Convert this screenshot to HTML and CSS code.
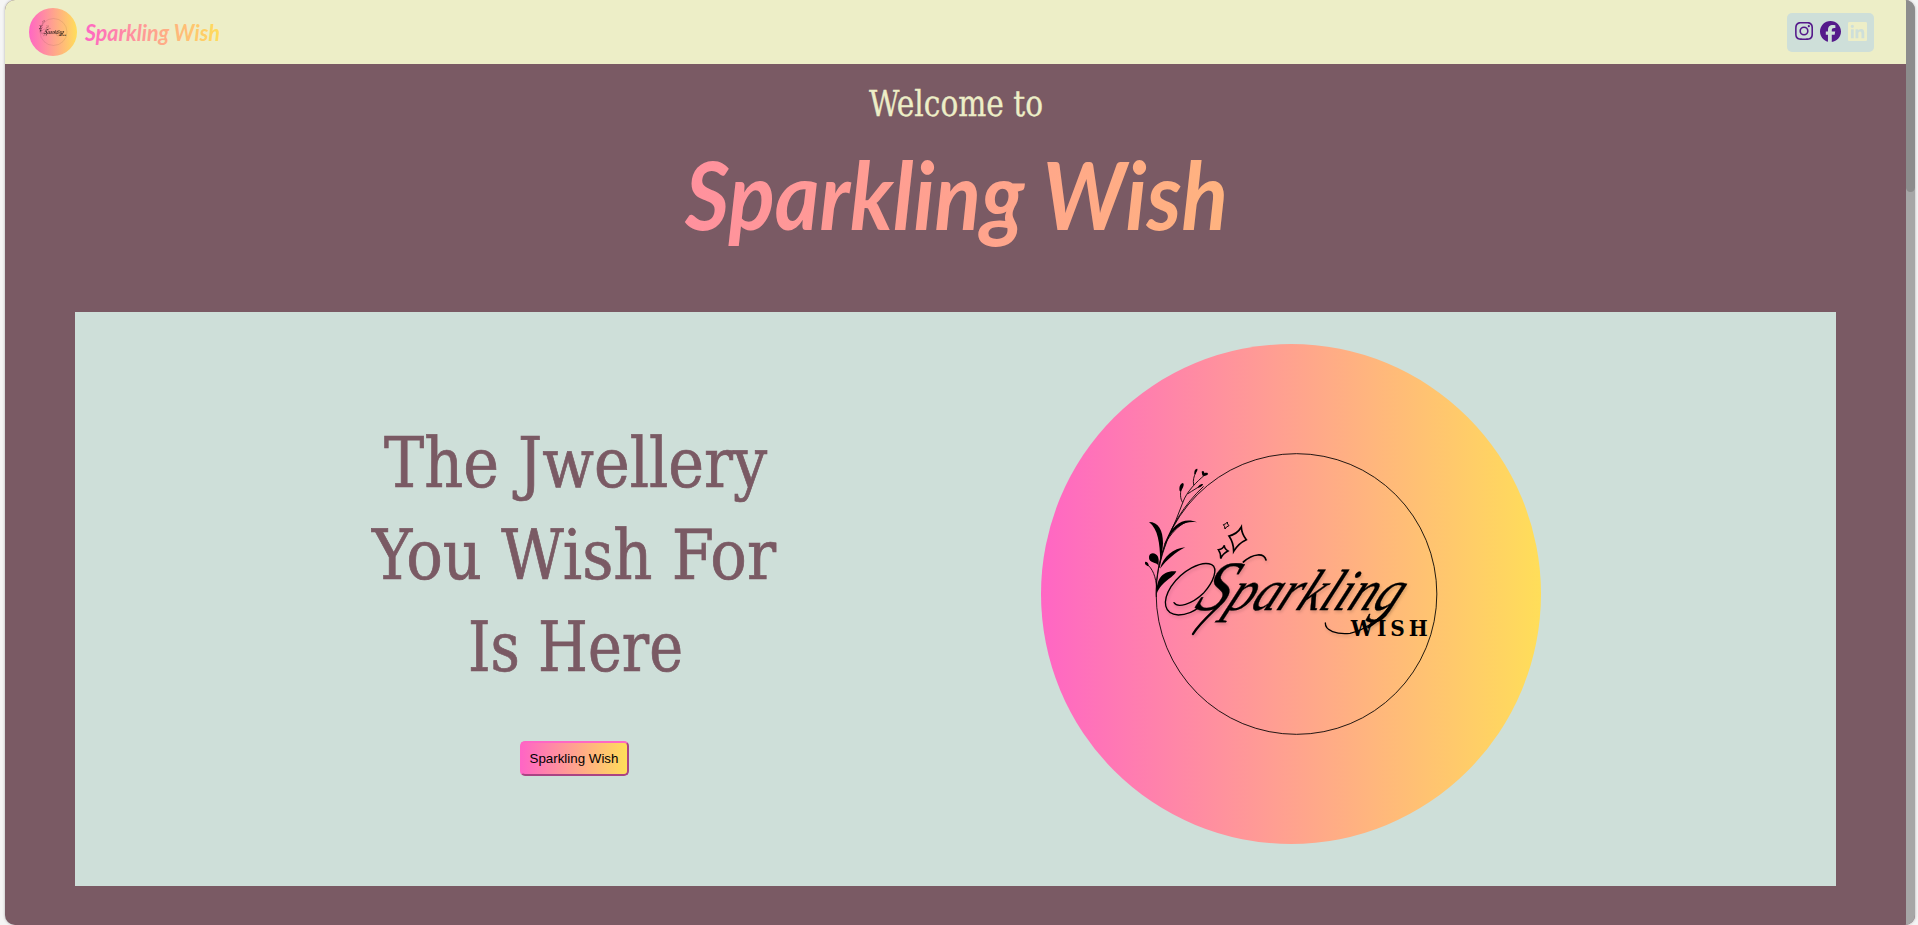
FILE: index.html
```html
<!DOCTYPE html>
<html lang="en">
<head>
<meta charset="utf-8">
<title>Sparkling Wish</title>
<link rel="stylesheet" href="styles.css">
</head>
<body>
<div class="window">
  <div class="page">
    <header class="navbar">
      <a class="brand">
        <span class="brand-logo">
          <svg viewBox="0 0 500 500"><use href="#emblem"/></svg>
        </span>
        <svg class="brand-name" viewBox="0 0 150 48">
          <defs>
            <linearGradient id="brandFill" gradientUnits="userSpaceOnUse" x1="0" y1="0" x2="136" y2="0">
              <stop offset="0" stop-color="#ff66c4"/><stop offset="1" stop-color="#ffde59"/>
            </linearGradient>
          </defs>
          <text class="script" x="0" y="33" font-size="22" textLength="135" lengthAdjust="spacingAndGlyphs" fill="url(#brandFill)">Sparkling Wish</text>
        </svg>
      </a>
      <nav class="social">
        <svg class="ic-instagram" viewBox="0 0 448 448"><path fill="#551a8b" d="M224 109a115 115 0 1 0 0 230 115 115 0 0 0 0-230zm0 190a75 75 0 1 1 0-150 75 75 0 0 1 0 150zM371 104a27 27 0 1 1-54 0 27 27 0 0 1 54 0zM448 132c-2-36-10-68-36-94S354 4 318 2C281 0 170 0 133 2 97 4 65 12 39 38S5 96 3 132c-2 37-2 148 0 185 2 36 10 68 36 94s58 34 94 36c37 2 148 2 185 0 36-2 68-10 94-36s34-58 36-94c2-37 2-148 0-185zm-48 224a76 76 0 0 1-43 43c-29 12-99 9-132 9s-102 3-132-9a76 76 0 0 1-43-43c-12-29-9-99-9-132s-3-102 9-132a76 76 0 0 1 43-43c29-12 99-9 132-9s102-3 132 9a76 76 0 0 1 43 43c12 29 9 99 9 132s3 102-9 132z"/></svg>
        <svg class="ic-facebook" viewBox="0 0 512 512"><path fill="#551a8b" d="M512 256C512 114.600 397.400 0 256 0S0 114.600 0 256c0 120 82.700 220.800 194.200 248.500V334.200h-52.800V256h52.800v-33.700c0-87.100 39.400-127.500 125-127.500 16.200 0 44.200 3.200 55.700 6.400V172c-6-.6-16.500-1-29.600-1-42 0-58.200 15.900-58.200 57.200V256h83.600l-14.400 78.200h-69.300v175.900C413.800 494.800 512 386.900 512 256z"/></svg>
        <svg class="ic-linkedin" viewBox="0 0 448 448"><path fill="#edeec7" d="M416 0H32C14 0 0 15 0 32v384c0 18 14 32 32 32h384c18 0 32-14 32-32V32c0-17-14-32-32-32zM135 384H69V170h66v214zM102 141a38 38 0 1 1 0-77 38 38 0 0 1 0 77zm282 243h-66V280c0-25-1-57-35-57s-40 27-40 55v106h-66V170h64v29h1c9-17 30-35 63-35 67 0 79 45 79 102v118z"/></svg>
      </nav>
    </header>

    <section class="intro">
      <svg class="welcome" viewBox="0 0 200 60">
        <text class="serif" x="13" y="41.500" font-size="35.500" stroke="#edeec7" stroke-width=".3" textLength="174" lengthAdjust="spacingAndGlyphs" fill="#edeec7">Welcome to</text>
      </svg>
      <svg class="title" viewBox="0 0 600 160">
        <defs>
          <linearGradient id="titleFill" gradientUnits="userSpaceOnUse" x1="-651" y1="0" x2="1250" y2="0">
            <stop offset="0" stop-color="#ff66c4"/><stop offset="1" stop-color="#ffde59"/>
          </linearGradient>
        </defs>
        <text class="script" x="29" y="96" font-size="93" textLength="543" lengthAdjust="spacingAndGlyphs" fill="url(#titleFill)">Sparkling Wish</text>
      </svg>
    </section>

    <section class="card">
      <div class="pitch">
        <svg class="headline" viewBox="0 0 432 270">
          <g class="serif" font-size="69" fill="#7a5a64" stroke="#7a5a64" stroke-width=".7">
            <text x="25" y="66.500" textLength="383" lengthAdjust="spacingAndGlyphs">The Jwellery</text>
            <text x="13" y="158.500" textLength="404" lengthAdjust="spacingAndGlyphs">You Wish For</text>
            <text x="109" y="250.500" textLength="215" lengthAdjust="spacingAndGlyphs">Is Here</text>
          </g>
        </svg>
        <button class="cta">Sparkling Wish</button>
      </div>
      <div class="emblem">
        <svg viewBox="0 0 500 500">
          <g id="emblem">
            <g transform="translate(-11 -14) scale(.33333)">
              <circle cx="799.500" cy="792" r="421" fill="none" stroke="#000" stroke-width="2.600"/>
              <!-- stems -->
              <g fill="none" stroke="#000" stroke-width="2.600" stroke-linecap="round">
                <path d="M379 800C376 735 390 690 405 640C425 592 460 525 520 470"/>
                <path d="M388 712C396 660 425 600 438 570L459 516C470 485 500 455 523 436"/>
                <path d="M457 516C450 505 451 490 453 478"/>
                <path d="M491 464C488 450 492 440 496 430"/>
                <path d="M474 491C490 480 500 475 515 465"/>
                <path d="M380 775C378 740 368 715 350 702"/>
                <path d="M405 640C425 610 440 590 470 575"/>
              </g>
              <!-- leaves and buds -->
              <g fill="#000">
                <path d="M357 576C385 576 399 600 399 640C398 660 395 675 391 690C389 640 385 598 357 576Z"/>
                <path d="M412 628C425 585 462 560 501 577C465 572 440 587 412 628Z"/>
                <path d="M390 716C400 680 430 655 466 652C435 668 410 690 390 716Z"/>
                <path d="M386 707C380 695 355 700 357 680C360 665 378 668 384 680C388 690 385 700 386 707Z"/>
                <path d="M380 792C378 750 395 720 439 724C430 745 395 752 380 792Z"/>
                <path d="M356 709C345 705 343 700 346 695C352 695 357 700 356 709Z"/>
                <path d="M449 483C446 470 452 459 459 459C465 463 457 476 453 484Z"/>
                <path d="M493 432C492 422 496 415 502 416C504 420 499 427 496 433Z"/>
                <path d="M515 425C520 421 523 425 523 430C530 427 535 429 534 433C528 439 519 439 517 436Z"/>
                <path d="M504 471C508 465 513 461 519 462C519 467 512 472 504 473Z"/>
              </g>
              <!-- stars -->
              <g fill="none" stroke="#000" stroke-width="5" stroke-linejoin="miter">
                <path d="M634 591Q635 612 649 629Q625 640 611 664Q611 638 597 618Q622 612 634 591Z"/>
                <path d="M583 646Q583 657 594 663Q578 671 572 686Q574 673 565 659Q579 658 583 646Z" stroke-width="4.500"/>
                <path d="M592 576Q591 582 597 587Q588 590 585 597Q585 589 580 584Q588 583 592 576Z" stroke-width="3"/>
              </g>
              <!-- flourishes -->
              <g class="flourish" fill="none" stroke="#000" stroke-linecap="round">
                <path d="M432 818C442 835 485 824 520 790C552 755 565 715 545 704C515 690 455 722 423 770C395 815 402 853 445 855C470 855 492 845 512 828" stroke-width="4"/>
                <path d="M640 696C670 670 702 668 708 690" stroke-width="5"/>
                <path d="M489 912C506 884 535 858 566 828" stroke-width="7"/>
                <path d="M1087 820C1060 858 1010 900 960 910C920 914 885 902 886 879" stroke-width="4"/>
                <path d="M1087 820C1070 845 1046 872 1015 892" stroke-width="7"/>
              </g>
              <g class="flourish">
                <text class="callig" transform="translate(488 839) skewX(-26)" x="0" y="0" font-size="174" stroke="#000" stroke-width="1" textLength="610" lengthAdjust="spacingAndGlyphs"><tspan font-size="212">S</tspan>parkling</text>
              </g>
              <text class="slab" x="962" y="917" font-size="67" textLength="231" lengthAdjust="spacing">WISH</text>
            </g>
          </g>
        </svg>
      </div>
    </section>
  </div>
  <div class="scrollbar"><div class="thumb"></div></div>
</div>
</body>
</html>
```
FILE: styles.css
```css
* { box-sizing: border-box; }
body {
  margin: 0;
  height: 925px;
  padding: 0 3px 0 5px;
  background: #f5f5f5;
  overflow: hidden;
}
svg { display: block; overflow: visible; }
.window {
  display: flex;
  height: 925px;
  border-radius: 10px;
  overflow: hidden;
  background: #7a5a64;
  box-shadow: 0 0 3px rgba(0, 0, 0, .3);
}
.page { flex: 1; }
.scrollbar { width: 9px; background: #a6a6a6; }
.thumb { height: 192px; background: #8c8c8c; border-radius: 0 0 5px 5px; }

.navbar {
  display: flex;
  align-items: center;
  justify-content: space-between;
  height: 64px;
  padding: 0 32px 0 24px;
  background: #edeec7;
}
.brand { display: flex; align-items: center; gap: 8px; }
.brand-logo, .emblem {
  border-radius: 50%;
  background: linear-gradient(90deg, #ff66c4, #ffde59);
}
.brand-logo { width: 48px; height: 48px; }
.brand-name { width: 150px; height: 48px; }
.social {
  display: flex;
  align-items: center;
  gap: 7px;
  width: 87px;
  height: 39px;
  padding: 0 0 2px 8px;
  border-radius: 5px;
  background: #cedfd9;
}
.ic-instagram { width: 18px; height: 18px; }
.ic-facebook { width: 21px; height: 21px; }
.ic-linkedin { width: 19px; height: 19px; }

.script { font-family: "Lato", sans-serif; font-style: italic; font-weight: 700; }
.serif { font-family: "DejaVu Serif Condensed", "DejaVu Serif", serif; font-stretch: condensed; }
.callig { font-family: "Liberation Serif", serif; font-style: italic; }
.slab { font-family: "DejaVu Serif Condensed", "DejaVu Serif", serif; font-stretch: condensed; font-weight: 700; }
.flourish { filter: drop-shadow(3px 6px 5px rgba(0, 0, 0, .15)); }

.intro {
  display: flex;
  flex-direction: column;
  align-items: center;
  height: 248px;
  padding-top: 10px;
}
.welcome { width: 200px; height: 60px; }
.title { width: 600px; height: 160px; }

.card {
  display: flex;
  gap: 250px;
  width: 1761px;
  height: 574px;
  margin: 0 70px;
  padding: 32px 0 0 284px;
  background: #cedfd9;
}
.pitch {
  display: flex;
  flex-direction: column;
  align-items: center;
  width: 432px;
  padding-top: 76px;
}
.headline { width: 432px; height: 270px; }
.cta {
  width: 109px;
  height: 35px;
  margin: 51px 2px 0 0;
  padding: 0;
  border: 2px solid;
  border-color: #ff66c4 #aa4483 #aa4483 #ff66c4;
  border-radius: 5px;
  background: linear-gradient(90deg, #ff66c4, #ffde59);
  color: #000;
  font: 13.333px "Liberation Sans", Arial, sans-serif;
  white-space: nowrap;
}
.emblem { width: 500px; height: 500px; }
```
